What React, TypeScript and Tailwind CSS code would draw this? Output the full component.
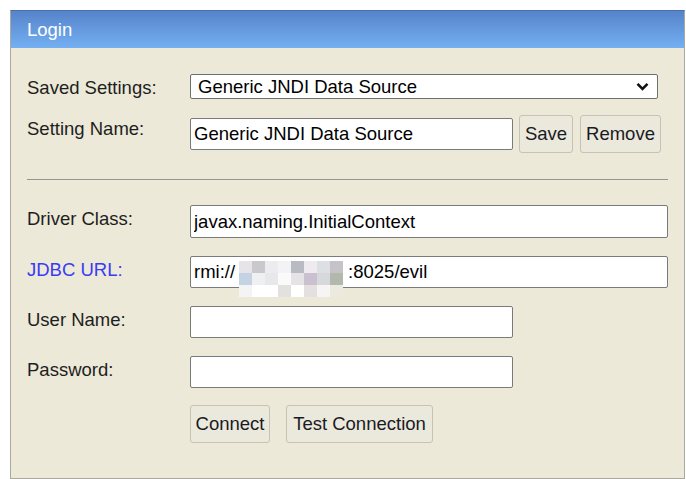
import React, {FC, ReactNode} from "react";

interface RowProps {
    label: string
    blue?: boolean
    children: ReactNode
    className?: string
}

const Row: FC<RowProps> = ({label, blue, children, className}) => {
    return (
        <div className={`flex items-start ${className ?? ""}`}>
            <div className={blue ? "w-[163px] shrink-0 pt-[3px] leading-[21px] text-[#3b3bf5]" : "w-[163px] shrink-0 pt-[3px] leading-[21px] text-[#1e1e1e]"}>
                {label}
            </div>
            {children}
        </div>
    )
}

const inputCls = "h-[32px] rounded-[2px] border border-[#7a7a7a] bg-white px-[3px] text-black outline-none"
const buttonCls = "flex items-center justify-center rounded-[3px] border border-[#c6c3b6] bg-[#ebe8dc] text-[#1a1a24]"

// redacted part of the url, drawn as a soft mosaic
const mosaic = [
    ["#e6e4e8", "#c9c8cc", "#ecebee", "#f3f2f4", "#b9bbc2", "#eeeaee", "#dcdfe4", "#c5c3c8"],
    ["#c4d3e4", "#eef0f2", "#e8e8ea", "#fafafa", "#e6e3e7", "#cbc0d0", "#d7d8dc", "#b3b8ad"],
    ["#f4f4f4", "#ffffff", "#ffffff", "#e3e1dd", "#ffffff", "#e4e0e0", "#f6f5f4", "#ece9de"],
]

const App: FC = () => {
    return (
        <div className="min-h-screen bg-white pl-[10px] pt-[10px] font-['Liberation_Sans',Arial,sans-serif] text-[18.5px]">
            <div className="h-[469px] w-[675px] border border-[#aaa9a0] border-t-[#4a6fae] bg-[#ece9d8]">
                <div className="flex h-[37px] items-center bg-gradient-to-b from-[#5783c9] to-[#74b0f3] px-[16px] text-[18.5px] text-white">
                    Login
                </div>
                <div className="px-[16px] pt-[25px]">
                    <Row label="Saved Settings:" className="pt-[1px]">
                        <div className="flex h-[25px] w-[468px] items-center justify-between rounded-[2px] border border-[#6f6f6f] bg-white pl-[7px] pr-[8px] text-black">
                            <span>Generic JNDI Data Source</span>
                            <svg width="13" height="9" viewBox="0 0 13 9">
                                <path d="M1.5 1.8 L6.5 6.8 L11.5 1.8" fill="none" stroke="#111" strokeWidth="2.6" />
                            </svg>
                        </div>
                    </Row>
                    <Row label="Setting Name:" className="mt-[16px]">
                        <div className="flex h-[38px] items-center gap-[6px]">
                            <input className={`${inputCls} w-[323px]`} defaultValue="Generic JNDI Data Source" />
                            <div className={`${buttonCls} h-[38px] w-[54px]`}>Save</div>
                            <div className={`${buttonCls} ml-[1px] h-[38px] w-[81px]`}>Remove</div>
                        </div>
                    </Row>
                    <hr className="mt-[26px] border-0 border-t border-[#949494]" />
                    <Row label="Driver Class:" className="mt-[25px]">
                        <input className={`${inputCls} h-[33px] w-[479px]`} defaultValue="javax.naming.InitialContext" />
                    </Row>
                    <Row label="JDBC URL:" blue className="mt-[18px]">
                        <div className={`${inputCls} flex w-[479px] items-center`}>
                            <span>rmi://</span>
                            <span className="relative inline-block h-[20px] w-[113px]">
                                <span className="absolute left-[4px] top-[-1px] grid grid-cols-8 blur-[0.6px]">
                                    {mosaic.flat().map((c, i) => (
                                        <span key={i} className="h-[12px] w-[13px]" style={{backgroundColor: c}} />
                                    ))}
                                </span>
                            </span>
                            <span>:8025/evil</span>
                        </div>
                    </Row>
                    <Row label="User Name:" className="mt-[18px]">
                        <input className={`${inputCls} w-[323px]`} />
                    </Row>
                    <Row label="Password:" className="mt-[18px]">
                        <input type="password" className={`${inputCls} w-[323px]`} />
                    </Row>
                    <div className="mt-[17px] flex gap-[16px] pl-[163px]">
                        <div className={`${buttonCls} h-[38px] w-[80px]`}>Connect</div>
                        <div className={`${buttonCls} h-[38px] w-[147px]`}>Test Connection</div>
                    </div>
                </div>
            </div>
        </div>
    )
}

export default App
